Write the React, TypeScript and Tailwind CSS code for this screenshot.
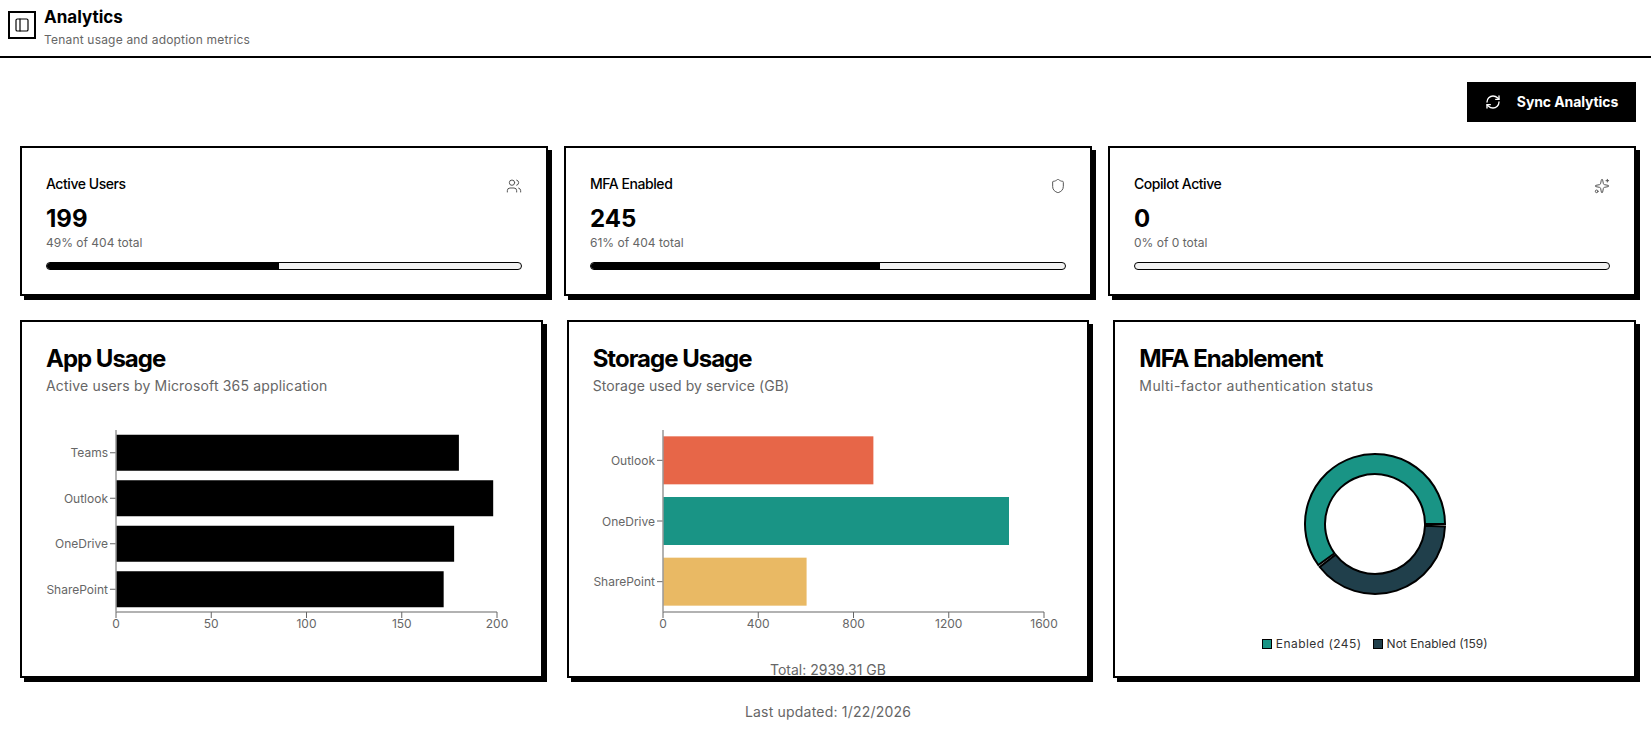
import { PanelLeft, RefreshCw, Shield, Sparkles, Users } from "lucide-react";
import type { ReactNode } from "react";

const AXIS = "#999999";
const LABEL = "#666666";
const TEAL = "#199485";
const NAVY = "#203f4b";

const stats = [
  { title: "Active Users", value: "199", note: "49% of 404 total", pct: 49, icon: <Users className="w-4 h-4" strokeWidth={1.5} /> },
  { title: "MFA Enabled", value: "245", note: "61% of 404 total", pct: 61, icon: <Shield className="w-4 h-4" strokeWidth={1.5} /> },
  { title: "Copilot Active", value: "0", note: "0% of 0 total", pct: 0, icon: <Sparkles className="w-4 h-4" strokeWidth={1.5} /> },
];

const apps = [
  { name: "Teams", value: 180, color: "#000000" },
  { name: "Outlook", value: 198, color: "#000000" },
  { name: "OneDrive", value: 177.5, color: "#000000" },
  { name: "SharePoint", value: 172, color: "#000000" },
];

const storage = [
  { name: "Outlook", value: 883.5, color: "#e76648" },
  { name: "OneDrive", value: 1453, color: TEAL },
  { name: "SharePoint", value: 603, color: "#e9b964" },
];

function StatCard({ title, value, note, pct, icon }: (typeof stats)[number]) {
  return (
    <div className="border-2 border-black bg-white p-6 shadow-[4px_4px_0_0_#000] h-[150px]">
      <div className="flex items-center justify-between h-[20px] mt-[2px]">
        <span className="text-[14px] leading-5 font-medium text-black tracking-[-0.45px]">{title}</span>
        <span className="text-[#555] mt-1">{icon}</span>
      </div>
      <div className="text-2xl leading-8 font-bold text-black mt-[9px]">{value}</div>
      <div className="text-xs leading-4 text-[#666]">{note}</div>
      <div className="h-2 mt-[11px] rounded-full border border-black bg-[#f2f2f2] overflow-hidden">
        <div className="h-full bg-black" style={{ width: `${pct}%` }} />
      </div>
    </div>
  );
}

function ChartCard({ title, sub, subClass, children }: { title: string; sub: string; subClass: string; children: ReactNode }) {
  return (
    <div className="border-2 border-black bg-white p-6 shadow-[4px_4px_0_0_#000] h-[358px]">
      <h2 className="text-2xl leading-[26px] font-bold text-black tracking-[-1px]">{title}</h2>
      <p className={`text-sm leading-5 text-[#666] mt-1 ${subClass}`}>{sub}</p>
      <div className="mt-6 h-[240px]">{children}</div>
    </div>
  );
}

function BarChart({ rows, max, ticks }: { rows: { name: string; value: number; color: string }[]; max: number; ticks: number[] }) {
  const left = 70;
  const width = 381;
  const top = 10;
  const height = 182;
  const band = height / rows.length;
  const barH = rows.length === 4 ? 36 : 48;
  return (
    <svg width="470" height="240" viewBox="0 0 470 240" className="block overflow-visible">
      {rows.map((r, i) => {
        const cy = top + band * i + band / 2;
        return (
          <g key={r.name}>
            <rect x={left} y={cy - barH / 2} width={(r.value / max) * width} height={barH} fill={r.color} />
            <line x1={left - 6} x2={left} y1={cy} y2={cy} stroke={LABEL} />
            <text x={left - 8} y={cy + 4.5} textAnchor="end" fontSize="12" fill={LABEL}>
              {r.name}
            </text>
          </g>
        );
      })}
      <line x1={left} x2={left} y1={top} y2={top + height} stroke={AXIS} strokeWidth="1.5" />
      <line x1={left} x2={left + width} y1={top + height} y2={top + height} stroke={AXIS} strokeWidth="1.5" />
      {ticks.map((t) => {
        const x = left + (t / max) * width;
        return (
          <g key={t}>
            <line x1={x} x2={x} y1={top + height} y2={top + height + 6} stroke={LABEL} />
            <text x={x} y={top + height + 16} textAnchor="middle" fontSize="12" fill={LABEL}>
              {t}
            </text>
          </g>
        );
      })}
    </svg>
  );
}

function arc(startDeg: number, endDeg: number, r0: number, r1: number, c: number) {
  const pt = (r: number, d: number) => {
    const a = (d * Math.PI) / 180;
    return `${c + r * Math.cos(a)} ${c - r * Math.sin(a)}`;
  };
  const large = endDeg - startDeg > 180 ? 1 : 0;
  return `M${pt(r1, startDeg)} A${r1} ${r1} 0 ${large} 0 ${pt(r1, endDeg)} L${pt(r0, endDeg)} A${r0} ${r0} 0 ${large} 1 ${pt(r0, startDeg)} Z`;
}

function Donut() {
  const enabledEnd = (245 / 404) * 356;
  return (
    <svg width="144" height="144" viewBox="0 0 144 144" className="block">
      <path d={arc(0, enabledEnd, 50, 70, 72)} fill={TEAL} stroke="#000" strokeWidth="2" />
      <path d={arc(enabledEnd + 2, 358, 50, 70, 72)} fill={NAVY} stroke="#000" strokeWidth="2" />
    </svg>
  );
}

function Legend({ color, label, textClass }: { color: string; label: string; textClass: string }) {
  return (
    <div className="flex items-center gap-1">
      <span className="w-[10px] h-[10px] border border-black" style={{ background: color }} />
      <span className={`text-xs leading-4 text-[#333] ${textClass}`}>{label}</span>
    </div>
  );
}

export default function App() {
  return (
    <div className="min-h-[742px] bg-white text-black [font-family:Inter,sans-serif]">
      <header className="h-[58px] border-b-2 border-black flex items-start pl-2 pt-[11px] gap-2">
        <button className="w-7 h-7 border-2 border-black flex items-center justify-center">
          <PanelLeft className="w-4 h-4" strokeWidth={1.75} />
        </button>
        <div className="-mt-[6px]">
          <h1 className="text-[17px] leading-6 font-bold">Analytics</h1>
          <p className="text-xs leading-4 text-[#666] tracking-[0.19px] mt-[3px]">Tenant usage and adoption metrics</p>
        </div>
      </header>

      <main className="pl-5 pr-[15px] pt-6 pb-5">
        <div className="flex justify-end mb-6">
          <button className="w-[169px] h-10 bg-black text-white flex items-center justify-center gap-4">
            <RefreshCw className="w-4 h-4" strokeWidth={2} />
            <span className="text-sm font-bold tracking-[-0.1px]">Sync Analytics</span>
          </button>
        </div>

        <div className="grid grid-cols-3 gap-4 mb-6">
          {stats.map((s) => (
            <StatCard key={s.title} {...s} />
          ))}
        </div>

        <div className="grid grid-cols-3 gap-6">
          <ChartCard title="App Usage" sub="Active users by Microsoft 365 application" subClass="tracking-[0.17px]">
            <BarChart rows={apps} max={200} ticks={[0, 50, 100, 150, 200]} />
          </ChartCard>
          <ChartCard title="Storage Usage" sub="Storage used by service (GB)" subClass="tracking-[0.08px]">
            <BarChart rows={storage} max={1600} ticks={[0, 400, 800, 1200, 1600]} />
            <p className="text-sm leading-5 text-[#666] text-center">Total: 2939.31 GB</p>
          </ChartCard>
          <ChartCard title="MFA Enablement" sub="Multi-factor authentication status" subClass="tracking-[0.42px]">
            <div className="flex flex-col items-center pt-8">
              <Donut />
              <div className="flex items-center gap-[11px] mt-10">
                <Legend color={TEAL} label="Enabled (245)" textClass="tracking-[0.45px]" />
                <Legend color={NAVY} label="Not Enabled (159)" textClass="tracking-[0px]" />
              </div>
            </div>
          </ChartCard>
        </div>

        <p className="text-sm leading-5 text-[#666] text-center mt-6 tracking-[0.2px]">Last updated: 1/22/2026</p>
      </main>
    </div>
  );
}
